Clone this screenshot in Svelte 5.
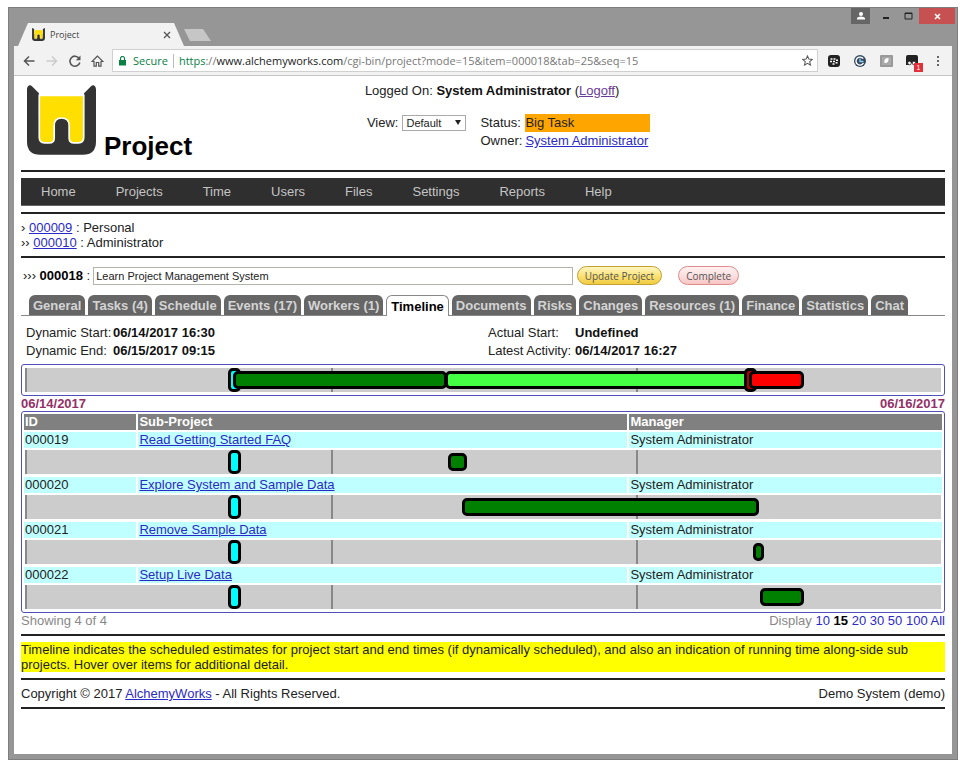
<script>
  const menu = ['Home', 'Projects', 'Time', 'Users', 'Files', 'Settings', 'Reports', 'Help'];

  const tabs = [
    'General', 'Tasks (4)', 'Schedule', 'Events (17)', 'Workers (1)', 'Timeline', 'Documents',
    'Risks', 'Changes', 'Resources (1)', 'Finance', 'Statistics', 'Chat'
  ];
  let activeTab = $state('Timeline');

  const parents = [
    { arrows: '›', id: '000009', name: 'Personal' },
    { arrows: '››', id: '000010', name: 'Administrator' }
  ];

  let title = $state('Learn Project Management System');

  // positions are percentages of the whole 06/14 - 06/16 range
  const now = 22.2;
  const ticks = [0, 33.4, 66.7];
  const overview = [
    { kind: 'done', left: 22.7, width: 23.4 },
    { kind: 'left', left: 45.9, width: 33.5 },
    { kind: 'due', left: 78.5 },
    { kind: 'late', left: 79, width: 6 }
  ];
  const subProjects = [
    { id: '000019', name: 'Read Getting Started FAQ', manager: 'System Administrator', left: 46.2, width: 2 },
    { id: '000020', name: 'Explore System and Sample Data', manager: 'System Administrator', left: 47.7, width: 32.4 },
    { id: '000021', name: 'Remove Sample Data', manager: 'System Administrator', left: 79.5, width: 1.2 },
    { id: '000022', name: 'Setup Live Data', manager: 'System Administrator', left: 80.2, width: 4.8 }
  ];

  const pageSizes = ['10', '15', '20', '30', '50', '100', 'All'];
  let pageSize = $state('15');
</script>

{#snippet logo(className)}
  <svg class={className} viewBox="0 0 208 210" aria-hidden="true">
    <path fill="#333" d="M0 14C0 2 8-3 15 3L36 24V100H172V24L193 3C200-3 208 2 208 14V170Q208 210 168 210H40Q0 210 0 170Z" />
    <path fill="#ffdf00" stroke="#fff" stroke-width="5" d="M37 31H171V158Q171 174 155 174H142Q127 174 127 159V122Q127 99 104 99Q82 99 82 122V159Q82 174 67 174H53Q37 174 37 158Z" />
  </svg>
{/snippet}

{#snippet track(bars)}
  <div class="track">
    {#each ticks as tick}
      <span class="tick" style="left: {tick}%"></span>
    {/each}
    <span class="marker now" style="left: {now}%"></span>
    {#each bars as bar}
      {#if bar.kind === 'due'}
        <span class="marker due" style="left: {bar.left}%"></span>
      {:else}
        <span class="bar {bar.kind}" style="left: {bar.left}%; width: {bar.width}%"></span>
      {/if}
    {/each}
  </div>
{/snippet}

<div class="desktop">
  <div class="window">
    <div class="titlebar">
      <div class="browser-tab">
        {@render logo('favicon')}
        <span>Project</span>
        <button class="tab-close" aria-label="Close tab">
          <svg width="8" height="8" viewBox="0 0 8 8"><path d="M1 1l6 6M7 1L1 7" stroke="#555" stroke-width="1.3" /></svg>
        </button>
      </div>
      <button class="new-tab" aria-label="New tab"></button>
      <div class="controls">
        <button class="person" aria-label="Profile">
          <svg width="8" height="8" viewBox="0 0 8 8"><circle cx="4" cy="2" r="2" fill="#fff" /><path d="M0 7.500V6Q1 4.500 4 4.500T8 6V7.500Z" fill="#fff" /></svg>
        </button>
        <button class="plain" aria-label="Minimize">
          <svg width="8" height="8" viewBox="0 0 8 8"><path d="M1 6h6" stroke="#222" stroke-width="2" /></svg>
        </button>
        <button class="plain" aria-label="Maximize">
          <svg width="9" height="8" viewBox="0 0 9 8"><path d="M1 1h7v6H1z" fill="none" stroke="#222" /><path d="M1 1.500h7" stroke="#222" /></svg>
        </button>
        <button class="close" aria-label="Close">
          <svg width="7" height="7" viewBox="0 0 7 7"><path d="M1 1l5 5M6 1L1 6" stroke="#fff" stroke-width="1.500" /></svg>
        </button>
      </div>
    </div>

    <div class="toolbar">
      <button aria-label="Back">
        <svg width="12" height="12" viewBox="0 0 12 12"><path d="M11.500 6H1.500M6 1.500L1.500 6 6 10.500" fill="none" stroke="#555" stroke-width="1.500" /></svg>
      </button>
      <button aria-label="Forward">
        <svg width="12" height="12" viewBox="0 0 12 12"><path d="M.5 6h10M6 1.500L10.500 6 6 10.500" fill="none" stroke="#ccc" stroke-width="1.500" /></svg>
      </button>
      <button aria-label="Reload">
        <svg width="12" height="12" viewBox="0 0 12 12"><path d="M10 3.200A5 5 0 1 0 10.800 7.500" fill="none" stroke="#555" stroke-width="1.600" /><path d="M11.500 .5V5.200H6.800Z" fill="#555" /></svg>
      </button>
      <button aria-label="Home page">
        <svg width="13" height="12" viewBox="0 0 13 12"><path d="M6.500 1L1 6.500H3V11.200H5.300V7.500H7.700V11.200H10V6.500H12Z" fill="none" stroke="#555" stroke-width="1.200" /></svg>
      </button>
      <div class="address">
        <svg width="7" height="10" viewBox="0 0 7 10"><path d="M0 4h7v5.500H0z" fill="#0b8043" /><path d="M1.500 4V2.500a2 2 0 0 1 4 0V4" fill="none" stroke="#0b8043" stroke-width="1.200" /></svg>
        <span class="secure">Secure</span>
        <span class="url"><span class="scheme">https</span>://<b>www.alchemyworks.com</b>/cgi-bin/project?mode=15&amp;item=000018&amp;tab=25&amp;seq=15</span>
        <svg width="11" height="11" viewBox="0 0 12 12"><path d="M6 1l1.500 3.500 3.800.3-2.900 2.500.9 3.700L6 9l-3.300 2 .9-3.700L.7 4.800l3.800-.3z" fill="none" stroke="#555" stroke-width="1.100" /></svg>
      </div>
      <div class="extensions">
        <button aria-label="BlackBerry">
          <svg width="12" height="12" viewBox="0 0 12 12"><rect width="12" height="12" rx="3" fill="#222" /><path d="M2.500 4h2M5.500 4h2M2 6.500h2M5 6.500h2M8 5.300h2M4.500 9h2M7.600 7.800h2" stroke="#fff" stroke-width="1.400" /></svg>
        </button>
        <button aria-label="History">
          <svg width="12" height="12" viewBox="0 0 12 12"><circle cx="6" cy="6" r="6" fill="#34495e" /><path d="M9.200 3.700A4 4 0 1 0 9.500 8" fill="none" stroke="#fff" stroke-width="1.400" /><path d="M6 3.500V6.500H9.500" fill="none" stroke="#8fd0f5" stroke-width="1.300" /></svg>
        </button>
        <button aria-label="Notes">
          <svg width="13" height="12" viewBox="0 0 13 12"><rect width="13" height="12" rx="1" fill="#999" /><rect x="2" y="2" width="9" height="8" fill="#aaa" /><path d="M4.500 8Q3.500 3 8.500 3 9 8.500 4.500 8" fill="#fff" /></svg>
        </button>
        <button class="with-badge" aria-label="Scripts, 1 active">
          <svg width="13" height="12" viewBox="0 0 13 12"><path d="M0 2Q0 0 2 0H10Q12 0 12 2V11H9V8H3V10H0Z" fill="#222" /><circle cx="3.500" cy="8" r="1.800" fill="#fff" stroke="#222" stroke-width=".8" /><circle cx="8" cy="8" r="1.800" fill="#fff" stroke="#222" stroke-width=".8" /></svg>
          <span class="badge">1</span>
        </button>
        <button aria-label="Menu">
          <svg width="4" height="12" viewBox="0 0 4 12"><path d="M1 1h2v2H1zM1 5h2v2H1zM1 9h2v2H1z" fill="#666" /></svg>
        </button>
      </div>
    </div>

    <main>
      <header>
        <div class="brand">
          {@render logo('logo')}
          <h1>Project</h1>
        </div>
        <div class="session">
          <div>Logged On: <b>System Administrator</b> (<a class="visited" href="#logoff">Logoff</a>)</div>
          <div class="info">
            <div class="view">
              <label for="view">View:</label>
              <span class="select">
                <select id="view">
                  <option>Default</option>
                </select>
              </span>
            </div>
            <div class="status">
              <span>Status:</span>
              <span class="big-task">Big Task</span>
              <span>Owner:</span>
              <a href="#owner">System Administrator</a>
            </div>
          </div>
        </div>
      </header>
      <hr />

      <nav>
        {#each menu as item}
          <a href="#{item.toLowerCase()}">{item}</a>
        {/each}
      </nav>
      <hr />

      <div class="crumbs">
        {#each parents as parent}
          <div>{parent.arrows} <a href="#{parent.id}">{parent.id}</a> : {parent.name}</div>
        {/each}
      </div>
      <hr />

      <form class="project" onsubmit={(e) => e.preventDefault()}>
        <label for="title">››› <b>000018</b> :</label>
        <input id="title" type="text" bind:value={title} />
        <button class="update" type="submit">Update Project</button>
        <button class="complete" type="button">Complete</button>
      </form>

      <div class="tabs" role="tablist">
        {#each tabs as tab}
          <button
            role="tab"
            class:active={tab === activeTab}
            aria-selected={tab === activeTab}
            onclick={() => (activeTab = tab)}>{tab}</button>
        {/each}
      </div>

      <dl>
        <div><dt>Dynamic Start:</dt><dd>06/14/2017 16:30</dd></div>
        <div><dt>Actual Start:</dt><dd>Undefined</dd></div>
        <div><dt>Dynamic End:</dt><dd>06/15/2017 09:15</dd></div>
        <div><dt>Latest Activity:</dt><dd>06/14/2017 16:27</dd></div>
      </dl>

      <div class="overview">
        {@render track(overview)}
      </div>
      <div class="split range">
        <span>06/14/2017</span>
        <span>06/16/2017</span>
      </div>

      <div class="list">
        <table>
          <colgroup>
            <col class="col-id" />
            <col class="col-name" />
            <col />
          </colgroup>
          <thead>
            <tr><th>ID</th><th>Sub-Project</th><th>Manager</th></tr>
          </thead>
          <tbody>
            {#each subProjects as sub}
              <tr class="sub">
                <td>{sub.id}</td>
                <td><a href="#{sub.id}">{sub.name}</a></td>
                <td>{sub.manager}</td>
              </tr>
              <tr>
                <td class="line" colspan="3">
                  {@render track([{ kind: 'done', left: sub.left, width: sub.width }])}
                </td>
              </tr>
            {/each}
          </tbody>
        </table>
      </div>
      <div class="split paging">
        <span>Showing 4 of 4</span>
        <span>
          Display
          {#each pageSizes as size}
            {#if size === pageSize}<b>{size}</b>{:else}<a href="#show-{size}" onclick={() => (pageSize = size)}>{size}</a>{/if}{' '}
          {/each}
        </span>
      </div>
      <hr />

      <p class="hint">
        Timeline indicates the scheduled estimates for project start and end times (if dynamically
        scheduled), and also an indication of running time along-side sub projects. Hover over items
        for additional detail.
      </p>
      <hr />

      <footer class="split">
        <span>Copyright © 2017 <a href="#alchemyworks">AlchemyWorks</a> - All Rights Reserved.</span>
        <span>Demo System (demo)</span>
      </footer>
      <hr />
    </main>
  </div>
</div>

<style>
  :global(body) {
    background: #fff;
  }

  .desktop {
    display: flex;
    box-sizing: border-box;
    min-height: 100vh;
    padding: 7px 11px 14px 8px;
    font: 13px/15px "Liberation Sans", Arial, sans-serif;
    color: #222;
  }

  .window {
    display: flex;
    flex-direction: column;
    flex: 1;
    min-width: 0;
    border: 1px solid #7e7e7e;
    background: #969696;
  }

  button {
    display: flex;
    align-items: center;
    justify-content: center;
    margin: 0;
    padding: 0;
    border: 0;
    background: none;
    font: inherit;
    color: inherit;
  }

  a {
    color: #2a2ac8;
  }

  a.visited {
    color: #6a3a9a;
  }

  /* browser frame */
  .titlebar {
    display: flex;
    align-items: flex-end;
    height: 38px;
    padding: 0 2px 0 9px;
  }

  .browser-tab {
    display: flex;
    align-items: center;
    gap: 5px;
    box-sizing: border-box;
    width: 166px;
    height: 23px;
    padding: 0 13px 0 14px;
    background: #f2f2f2;
    clip-path: polygon(10px 0, calc(100% - 10px) 0, 100% 100%, 0 100%);
    font: 9px/12px "Open Sans", "Noto Sans", sans-serif;
    color: #444;
  }

  .favicon {
    width: 13px;
    height: 13px;
  }

  .tab-close {
    margin-left: auto;
  }

  .new-tab {
    align-self: flex-end;
    width: 27px;
    height: 12px;
    margin-bottom: 5px;
    background: #c6c6c6;
    clip-path: polygon(0 0, 19px 0, 100% 100%, 6px 100%);
  }

  .controls {
    display: flex;
    align-self: flex-start;
    margin-left: auto;
  }

  .controls button {
    height: 16px;
  }

  .controls .person {
    width: 19px;
    margin-right: 5px;
    background: #666;
  }

  .controls .plain {
    width: 22px;
  }

  .controls .close {
    width: 36px;
    background: #c75050;
  }

  .toolbar {
    display: flex;
    align-items: center;
    height: 29px;
    margin: 0 5px;
    padding: 0 1px 0 3px;
    border-bottom: 1px solid #c4c4c4;
    background: #f2f2f2;
  }

  .toolbar button {
    width: 23px;
    height: 22px;
  }

  .address {
    display: flex;
    align-items: center;
    flex: 1;
    min-width: 0;
    box-sizing: border-box;
    height: 23px;
    margin-left: 3px;
    padding: 0 4px 0 6px;
    border: 1px solid #d0d0d0;
    background: #fff;
    font: 11px/14px "Open Sans", "Noto Sans", sans-serif;
    color: #777;
  }

  .secure {
    margin-left: 7px;
    padding-right: 5px;
    border-right: 1px solid #bbb;
    color: #0b8043;
  }

  .scheme {
    color: #0b8043;
  }

  .url {
    flex: 1;
    overflow: hidden;
    padding-left: 5px;
    white-space: nowrap;
  }

  .url b {
    font-weight: normal;
    color: #222;
  }

  .extensions {
    display: flex;
    margin-left: 3px;
  }

  .extensions button {
    width: 26px;
  }

  .with-badge {
    position: relative;
  }

  .badge {
    position: absolute;
    right: 2px;
    bottom: 0;
    width: 9px;
    height: 9px;
    background: #e0303a;
    font-size: 7px;
    line-height: 9px;
    color: #fff;
  }

  /* page */
  main {
    flex: 1;
    margin: 0 5px 5px;
    padding: 0 7px;
    background: #fff;
  }

  hr {
    height: 2px;
    margin: 6px 0;
    border: 0;
    background: #222;
  }

  header {
    display: grid;
    grid-template-columns: 37% 1fr;
    gap: 2px;
    height: 88px;
    line-height: 18px;
  }

  .brand {
    display: flex;
    align-items: baseline;
    gap: 8px;
    padding: 9px 0 0 6px;
  }

  .logo {
    width: 69px;
    height: 70px;
  }

  h1 {
    margin: 0;
    font-size: 26px;
    line-height: 30px;
    color: #000;
  }

  .session {
    padding-top: 6px;
  }

  .session b {
    color: #111;
  }

  .info {
    display: flex;
    align-items: flex-start;
    gap: 14px;
    margin-top: 14px;
    padding-left: 2px;
  }

  .view {
    display: flex;
    align-items: center;
    gap: 4px;
  }

  .select {
    position: relative;
    display: flex;
  }

  .select::after {
    content: "";
    position: absolute;
    top: 5px;
    right: 5px;
    border: 3px solid transparent;
    border-top: 5px solid #222;
    border-bottom: 0;
    pointer-events: none;
  }

  select {
    appearance: none;
    width: 64px;
    height: 16px;
    padding: 0 3px;
    border: 1px solid #aaa;
    border-radius: 0;
    background: #fff;
    font: 11px/14px "Liberation Sans", Arial, sans-serif;
    color: #222;
  }

  .status {
    display: grid;
    grid-template-columns: 45px 125px;
  }

  .big-task {
    background: #ffa500;
  }

  nav {
    display: flex;
    gap: 40px;
    box-sizing: border-box;
    height: 28px;
    padding: 6px 20px 0;
    border-bottom: 1px solid #666;
    background: #2f2f2f;
  }

  nav a {
    color: #c4c4c4;
    text-decoration: none;
  }

  .project {
    display: flex;
    align-items: center;
    height: 23px;
    padding-left: 2px;
  }

  .project label {
    white-space: nowrap;
  }

  .project b {
    color: #000;
  }

  .project input {
    box-sizing: border-box;
    width: 52%;
    height: 18px;
    margin: 0 4px 0 3px;
    padding: 0 2px;
    border: 1px solid #b4b4ac;
    font: 11px/14px "Liberation Sans", Arial, sans-serif;
    color: #222;
  }

  .project button {
    height: 19px;
    padding: 0 7px;
    border: 1px solid;
    border-radius: 10px;
    font: 10px/14px "Open Sans", "Noto Sans", sans-serif;
    color: #555;
    white-space: nowrap;
  }

  .project .update {
    margin-right: 16px;
    border-color: #c2a030;
    background: linear-gradient(#fff6c0, #fbe37a 50%, #f2cc40);
  }

  .project .complete {
    border-color: #e08a8a;
    background: linear-gradient(#fff0f0, #fce0e0 50%, #f6c4c4);
  }

  .tabs {
    display: flex;
    gap: 3px;
    margin-top: 8px;
    padding: 0 8px;
    border-bottom: 1px solid #888;
  }

  .tabs button {
    height: 20px;
    padding: 0 4px;
    border-radius: 6px 6px 0 0;
    background: #666;
    font-weight: bold;
    color: #d4d4d4;
    white-space: nowrap;
  }

  .tabs button.active {
    height: 21px;
    margin-bottom: -1px;
    border: 1px solid #888;
    border-bottom: 0;
    background: #fff;
    color: #000;
  }

  dl {
    display: grid;
    grid-template-columns: 1fr 1fr;
    margin: 8px 0 4px;
    line-height: 18px;
  }

  dl div {
    display: flex;
    padding-left: 5px;
  }

  dt {
    width: 87px;
  }

  dd {
    margin: 0;
    font-weight: bold;
    color: #111;
  }

  .overview,
  .list {
    border: 1px solid #5050b8;
    border-radius: 3px;
  }

  .overview {
    padding: 3px;
  }

  .track {
    position: relative;
    height: 24px;
    background: #ccc;
  }

  .tick {
    position: absolute;
    top: 0;
    bottom: 0;
    width: 2px;
    background: #888;
  }

  .marker,
  .bar {
    position: absolute;
    box-sizing: border-box;
    border: 3px solid #000;
    border-radius: 5px;
  }

  .marker {
    top: 0;
    width: 13px;
    height: 24px;
  }

  .bar {
    top: 3px;
    height: 18px;
  }

  .now {
    background: #00ffff;
  }

  .done {
    background: #008000;
  }

  .left {
    background: #44ff44;
  }

  .due {
    background: #b00000;
  }

  .late {
    background: #ff0000;
  }

  .split {
    display: flex;
    justify-content: space-between;
  }

  .range {
    font-weight: bold;
    color: #933068;
  }

  table {
    width: 100%;
    table-layout: fixed;
    border-collapse: separate;
    border-spacing: 2px;
  }

  .col-id {
    width: 12.3%;
  }

  .col-name {
    width: 53.5%;
  }

  th,
  td {
    height: 16px;
    padding: 0 1px;
    line-height: 16px;
    text-align: left;
  }

  th {
    background: #808080;
    color: #fff;
  }

  .sub td {
    background: #c0ffff;
  }

  td.line {
    height: 25px;
    vertical-align: top;
  }

  .paging {
    color: #888;
  }

  .paging a {
    text-decoration: none;
  }

  .paging b {
    color: #000;
  }

  .hint {
    margin: 0;
    background: #ffff00;
  }
</style>
